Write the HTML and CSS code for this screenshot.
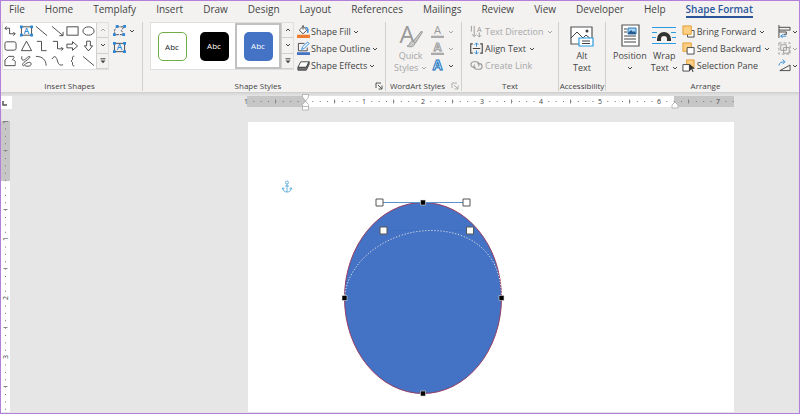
FILE: index.html
```html
<!DOCTYPE html>
<html lang="en">
<head>
<meta charset="utf-8">
<title>Document editor</title>
<link rel="stylesheet" href="styles.css">
</head>
<body>
<svg class="sprite" aria-hidden="true">
  <symbol id="caret" viewBox="0 0 6 6"><path d="M1 2l2 2 2-2" fill="none" stroke="currentColor" stroke-width="1"/></symbol>
  <symbol id="more" viewBox="0 0 6 6"><path d="M0.5 0.8h5" stroke="currentColor" fill="none"/><path d="M0.5 2.5h5L3 5.3z" fill="currentColor"/></symbol>
  <symbol id="launch" viewBox="0 0 8 8"><path d="M1 6V1h5M3 3l3.6 3.6M7 3.5V7H3.5" stroke="currentColor" fill="none" stroke-width=".9"/></symbol>
</svg>
<div class="app">
  <nav class="tabs" aria-label="Ribbon tabs">
    <a href="#">File</a><a href="#">Home</a><a href="#">Templafy</a><a href="#">Insert</a><a href="#">Draw</a><a href="#">Design</a><a href="#">Layout</a><a href="#">References</a><a href="#">Mailings</a><a href="#">Review</a><a href="#">View</a><a href="#">Developer</a><a href="#">Help</a><a href="#" class="active" aria-current="page">Shape Format</a>
  </nav>

  <div class="ribbon">
    <section class="group shapes">
      <div class="tools">
        <div class="gallery">
          <div class="shape-grid">
            <button aria-label="Elbow connector"><svg viewBox="0 0 14 12"><path d="M1 3h5v6h6M3 1L1 3l2 2M10 7l2 2-2 2"/></svg></button>
            <button aria-label="Text box"><svg viewBox="0 0 14 12"><rect x="1.5" y="1.5" width="11" height="9"/><text class="glyph" x="7" y="9">A</text><path class="bluefill" d="M0 0h3v3H0zM11 0h3v3h-3zM0 9h3v3H0zM11 9h3v3h-3z"/></svg></button>
            <button aria-label="Line"><svg viewBox="0 0 14 12"><path d="M1 1l12 10"/></svg></button>
            <button aria-label="Arrow line"><svg viewBox="0 0 14 12"><path d="M1 1l12 10M13 7v4H9"/></svg></button>
            <button aria-label="Rectangle"><svg viewBox="0 0 14 12"><rect x="1" y="1.5" width="12" height="9"/></svg></button>
            <button aria-label="Oval"><svg viewBox="0 0 14 12"><ellipse cx="7" cy="6" rx="6" ry="4.5"/></svg></button>
            <button aria-label="Rounded rectangle"><svg viewBox="0 0 14 12"><rect x="1" y="1.5" width="12" height="9" rx="2"/></svg></button>
            <button aria-label="Triangle"><svg viewBox="0 0 14 12"><path d="M7 .8L12.5 11h-11z"/></svg></button>
            <button aria-label="Elbow"><svg viewBox="0 0 14 12"><path d="M2 1h5v10h5.5"/></svg></button>
            <button aria-label="Elbow arrow"><svg viewBox="0 0 14 12"><path d="M2 1h5v8h6M11 7l2 2-2 2"/></svg></button>
            <button aria-label="Right arrow"><svg viewBox="0 0 14 12"><path d="M1 4h6V1.3L12.5 6 7 10.7V8H1z"/></svg></button>
            <button aria-label="Down arrow"><svg viewBox="0 0 14 12"><path d="M5 .8h4v5h2.5L7 11.3 2.5 5.8H5z"/></svg></button>
            <button aria-label="Freeform"><svg viewBox="0 0 14 12"><path d="M1 11V5l4-4h5c3 1-3 4 0 4s2 3 2 6z"/></svg></button>
            <button aria-label="Scribble"><svg viewBox="0 0 14 12"><path d="M2 1c-1 5 2 5 5 2s5-2 3 0-6 4-7 6 1 3 2 1 7-4 7-1-4 3-7 2"/></svg></button>
            <button aria-label="Arc"><svg viewBox="0 0 14 12"><path d="M1 1c7 0 11 4 11 10"/></svg></button>
            <button aria-label="Curve"><svg viewBox="0 0 14 12"><path d="M1 4c3-5 5-2 6 2s3 5 6 4"/></svg></button>
            <button aria-label="Brace"><svg viewBox="0 0 14 12"><path d="M9 .8c-2 0-2 .8-2 2v1.7L5.5 6 7 7.5v1.7c0 1.2 0 2 2 2"/></svg></button>
            <button aria-label="Straight line"><svg viewBox="0 0 14 12"><path d="M1 1l12 10"/></svg></button>
          </div>
          <div class="scroller">
            <button class="off" aria-label="Scroll shapes up"><svg class="caret up"><use href="#caret"/></svg></button>
            <button aria-label="Scroll shapes down"><svg class="caret"><use href="#caret"/></svg></button>
            <button aria-label="More shapes"><svg class="caret"><use href="#more"/></svg></button>
          </div>
        </div>
        <div class="stack edit">
          <button aria-label="Edit shape"><svg class="icon" viewBox="0 0 14 12"><path class="ink" d="M4 2h8L9 6l3 4.5H2L1.5 6z" stroke-dasharray="3 1"/><path class="bluefill" d="M3 0h3v3H3zM11 0h3v3h-3zM0 9h3v3H0zM10 9h3v3h-3z"/></svg><svg class="caret"><use href="#caret"/></svg></button>
          <button aria-label="Draw text box"><svg class="icon" viewBox="0 0 14 12"><rect class="ink" x="1.5" y="1.5" width="11" height="9"/><text class="glyph" x="7" y="9">A</text><path class="bluefill" d="M0 0h3v3H0zM11 0h3v3h-3zM0 9h3v3H0zM11 9h3v3h-3z"/></svg></button>
        </div>
      </div>
      <h2>Insert Shapes</h2>
    </section>

    <section class="group styles">
      <div class="tools">
        <div class="gallery">
          <div class="style-list">
            <button><span class="swatch outline">Abc</span></button>
            <button><span class="swatch black">Abc</span></button>
            <button class="selected" aria-pressed="true"><span class="swatch azure">Abc</span></button>
          </div>
          <div class="scroller">
            <button aria-label="Scroll styles up"><svg class="caret up"><use href="#caret"/></svg></button>
            <button aria-label="Scroll styles down"><svg class="caret"><use href="#caret"/></svg></button>
            <button aria-label="More styles"><svg class="caret"><use href="#more"/></svg></button>
          </div>
        </div>
        <div class="stack">
          <button><svg class="icon" viewBox="0 0 14 14"><path d="M0 10.5h14V14H0z" fill="#ed7d31"/><path d="M6.5 1.5L2.5 5.5 6.5 9.5 10.5 5.5z" fill="#fff" stroke="#444"/><path class="ink" d="M6.5 0v5"/><path class="blue" d="M9 2.5c3 0 3 3 2.5 6" stroke-width="1.5"/></svg>Shape Fill<svg class="caret"><use href="#caret"/></svg></button>
          <button><svg class="icon" viewBox="0 0 14 14"><path d="M0 11h14v3H0z" fill="#4472c4"/><path class="ink" d="M8 1.5H1.5v8H11V6"/><path d="M5 8l1-3 5.5-5L13 1.7 7.5 7z" fill="#fff" stroke="#2b88d8"/></svg>Shape Outline<svg class="caret"><use href="#caret"/></svg></button>
          <button><svg class="icon" viewBox="0 0 14 14"><path d="M1 9l3-6h9l-3 6z" fill="#fff" stroke="#444"/><path d="M1 9v3h9l3-6V3l-3 6z" fill="#777" stroke="#444"/></svg>Shape Effects<svg class="caret"><use href="#caret"/></svg></button>
        </div>
      </div>
      <h2>Shape Styles</h2>
      <button class="launch" aria-label="Shape style options"><svg><use href="#launch"/></svg></button>
    </section>

    <section class="group wordart">
      <div class="tools">
        <button class="tall off"><svg class="big" viewBox="0 0 24 24"><text class="letter large" x="8" y="19">A</text><path d="M22.5 7l-8 10 2 2 7-11zM14 17c-4 0-2 4-6 5 4 2 8 0 8-3z" fill="#c8c8c8" stroke="#999"/></svg><span>Quick</span><span>Styles <svg class="caret"><use href="#caret"/></svg></span></button>
        <div class="stack effects">
          <button class="off" aria-label="Text fill"><svg class="icon" viewBox="0 0 14 14"><path d="M0 11.5h14V14H0z" fill="#aaa"/><text class="letter" x="7" y="10">A</text></svg><svg class="caret"><use href="#caret"/></svg></button>
          <button class="off" aria-label="Text outline"><svg class="icon" viewBox="0 0 14 14"><path d="M0 11.5h14V14H0z" fill="#aaa"/><text class="letter hollow" x="7" y="10">A</text></svg><svg class="caret"><use href="#caret"/></svg></button>
          <button aria-label="Text effects"><svg class="icon" viewBox="0 0 14 14"><text class="letter glow" x="7" y="12">A</text></svg><svg class="caret"><use href="#caret"/></svg></button>
        </div>
      </div>
      <h2>WordArt Styles</h2>
      <button class="launch off" aria-label="WordArt options"><svg><use href="#launch"/></svg></button>
    </section>

    <section class="group text">
      <div class="tools">
        <div class="stack">
          <button class="off"><svg class="icon" viewBox="0 0 14 14"><path d="M4.5 1v11M2 10l2.5 2.5L7 10M1.5 1v6M10 8v5M8 11l2 2 2-2" fill="none" stroke="#999"/><text class="letter small" x="10" y="7">A</text></svg>Text Direction<svg class="caret"><use href="#caret"/></svg></button>
          <button><svg class="icon" viewBox="0 0 14 14"><path class="ink" d="M3 2H.8v10H3M11 2h2.2v10H11M3 7h8" stroke-width="1.2"/><path class="blue" d="M7 1v4M5 3l2-2 2 2M7 13V9M5 11l2 2 2-2"/></svg>Align Text<svg class="caret"><use href="#caret"/></svg></button>
          <button class="off"><svg class="icon" viewBox="0 0 14 14"><path d="M6 9H4a3 3 0 010-6h3a3 3 0 012 5M8 5h2a3 3 0 010 6H7a3 3 0 01-2-5" fill="none" stroke="#999" stroke-width="1.2"/></svg>Create Link</button>
        </div>
      </div>
      <h2>Text</h2>
    </section>

    <section class="group access">
      <div class="tools">
        <button class="tall"><svg class="big" viewBox="0 0 24 24"><path d="M1 3h21v17H1z" fill="#fff" stroke="#555" stroke-width="1.2"/><path class="ink" d="M1 14l6-6 6 6 3-3 6 5"/><circle cx="17" cy="7" r="1.5" fill="#444"/><path d="M9 14h14v8H9z" fill="#fff" stroke="#2b9be0" stroke-width="1.2"/><path class="ink" d="M12 17h8M12 19.5h8"/></svg><span>Alt</span><span>Text</span></button>
      </div>
      <h2>Accessibility</h2>
    </section>

    <section class="group arrange">
      <div class="tools">
        <button class="tall"><svg class="big" viewBox="0 0 24 24"><path d="M4 1h17v21H4z" fill="#fff" stroke="#555" stroke-width="1.2"/><path d="M10 4h8v6h-8z" fill="#a8d5f5" stroke="#2b78b8"/><path d="M10 9l3-3 2 2 1-1 2 2v1h-8z" fill="#245c91"/><path class="ink" d="M6 5h3M6 8h3M6 12h12M6 15h12M6 18h12"/></svg><span>Position</span><span><svg class="caret"><use href="#caret"/></svg></span></button>
        <button class="tall"><svg class="big" viewBox="0 0 24 24"><path d="M0 3.5h24M0 8.5h5M19 8.5h5M0 13.5h4M20 13.5h4M0 19.5h24" stroke="#2b9be0" stroke-width="1.2"/><path d="M5 17v-2a7 7 0 0114 0v2h-4v-2a3 3 0 00-6 0v2z" fill="#333"/></svg><span>Wrap</span><span>Text <svg class="caret"><use href="#caret"/></svg></span></button>
        <div class="stack order">
          <button><svg class="icon" viewBox="0 0 14 14"><path d="M6 6h7v7H6z" fill="#fff" stroke="#444"/><path d="M1 1h9v9H1z" fill="#ffd083" stroke="#e09a32"/></svg>Bring Forward<svg class="caret"><use href="#caret"/></svg></button>
          <button><svg class="icon" viewBox="0 0 14 14"><path d="M1 1h9v9H1z" fill="#ffd083" stroke="#e09a32"/><path d="M5.5 6H13v7H5.5z" fill="#fff" stroke="#444"/></svg>Send Backward<svg class="caret"><use href="#caret"/></svg></button>
          <button><svg class="icon" viewBox="0 0 14 14"><path d="M5 1h8v8H5z" fill="#ffd083" stroke="#e09a32"/><path d="M1 6h7v7H1z" fill="#fff" stroke="#444"/><path d="M8 5v8l2-2 1.5 3 1-.5-1.5-3h3z" fill="#333"/></svg>Selection Pane</button>
        </div>
        <div class="stack align">
          <button aria-label="Align"><svg class="icon" viewBox="0 0 14 14"><path class="ink" d="M1 0v14M1 2.5h12v3H1M1 7.5h8v2.5H6"/><path class="blue" d="M9 12H3M5 10l-2 2 2 2"/></svg><svg class="caret"><use href="#caret"/></svg></button>
          <button class="off" aria-label="Group"><svg class="icon" viewBox="0 0 14 14"><path d="M3 3h6v6H3zM6 6h6v6H6z" fill="none" stroke="#999"/><path d="M1 1h12v12H1z" fill="none" stroke="#999" stroke-dasharray="3 2"/></svg><svg class="caret"><use href="#caret"/></svg></button>
          <button aria-label="Rotate"><svg class="icon" viewBox="0 0 14 14"><path class="ink" d="M2 12.5h11v-6z"/><path class="blue" d="M1 7c0-3 3-4 6-4M5 .5L7.5 3 5 5.5"/></svg><svg class="caret"><use href="#caret"/></svg></button>
        </div>
      </div>
      <h2>Arrange</h2>
    </section>
  </div>

  <main class="workspace">
    <div class="side">
      <button class="tabstop" aria-label="Tab stop"><svg viewBox="0 0 10 13"><path d="M2 5v4h4" fill="none" stroke="#555" stroke-width="1.5"/></svg></button>
      <svg class="vruler" width="9" height="291" viewBox="0 0 9 291">
        <path d="M0 0h9v60H0z" fill="#c6c6c6"/><path d="M0 60h9v231H0z" fill="#fff"/>
        <path class="dots" d="M4.5 7.5V291"/>
        <path class="dash" d="M2.5 29.5h4M2.5 88.5h4M2.5 147.5h4M2.5 206.5h4M2.5 265.5h4"/>
        <path d="M0 114h9v8H0zM0 173h9v8H0zM0 232h9v8H0z" fill="#fff"/>
        <g class="num"><text transform="translate(7 1) rotate(-90)">1</text><text transform="translate(7 118) rotate(-90)">1</text><text transform="translate(7 177) rotate(-90)">2</text><text transform="translate(7 236) rotate(-90)">3</text></g>
      </svg>
    </div>
    <div class="desk">
      <svg class="hruler" width="490" height="18" viewBox="0 0 490 18">
        <path d="M3 3h58v11H3z" fill="#c6c6c6"/><path d="M61 3h369v11H61z" fill="#fff"/><path d="M430 3h60v11h-60z" fill="#c6c6c6"/>
        <path class="dots" d="M9.3 8.5H490"/>
        <path class="dash" d="M31.5 6.5v4M90.5 6.5v4M149.5 6.5v4M208.5 6.5v4M267.5 6.5v4M326.5 6.5v4M385.5 6.5v4M444.5 6.5v4"/>
        <path d="M116 4h8v9h-8zM175 4h8v9h-8zM234 4h8v9h-8zM293 4h8v9h-8zM352 4h8v9h-8zM411 4h8v9h-8z" fill="#fff"/><path d="M470 4h8v9h-8z" fill="#c6c6c6"/>
        <g class="num"><text x="2" y="11">1</text><text x="120" y="11">1</text><text x="179" y="11">2</text><text x="238" y="11">3</text><text x="297" y="11">4</text><text x="356" y="11">5</text><text x="415" y="11">6</text><text x="474" y="11">7</text></g>
        <path d="M58.5 1.5h6V4l-3 4-3-4zM61.5 8l3 3.5V17h-6v-5.5zM58.5 13.5h6M431 9l3 3v3h-6v-3z" fill="#fff" stroke="#aaa" stroke-width=".8"/>
      </svg>
      <article class="page">
        <svg width="486" height="290" viewBox="0 0 486 290" role="img" aria-label="Oval with edit points">
          <g class="anchor"><circle cx="39" cy="60.5" r="1.5"/><path d="M39 62v8M37 64h4M35 66c0 3 1.5 4 4 4s4-1 4-4M34 67.5l1-2 1.5 1.5M44 67.5l-1-2-1.5 1.5"/></g>
          <ellipse cx="175" cy="176" rx="78.5" ry="95.5" fill="#4472c4" stroke="#963e63"/>
          <path d="M132 80.5h86" stroke="#5b91cc"/><path d="M136 108.5h86" stroke="#3d6fc5"/>
          <path d="M96.5 176C99 138 141 108.5 183 108.5C225 108.5 254 133 253.5 176" fill="none" stroke="#e4e4e4" stroke-dasharray="1.2 1.8"/>
          <path d="M128 77h7v7h-7zM215 77h7v7h-7zM132 105h7v7h-7zM218.5 105h7v7h-7z" fill="#fff" stroke="#555"/>
          <path d="M172.5 78h5v5h-5zM94 173.5h5v5h-5zM251 173.5h5v5h-5zM172.5 269h5v5h-5z" stroke="#ddd" stroke-width=".6"/>
        </svg>
      </article>
    </div>
  </main>
</div>
</body>
</html>
```
FILE: styles.css
```css
* { box-sizing: border-box; }
body { margin: 0; font-family: "Open Sans", "Noto Sans", sans-serif; font-size: 9px; color: #444; }
.sprite { display: none; }
.app { min-height: 100vh; display: flex; flex-direction: column; border: 1px solid #b47fdb; background: #f3f2f1; overflow: hidden; }
button { display: flex; align-items: center; padding: 0; border: 0; background: none; color: inherit; font: inherit; white-space: nowrap; }
svg { display: block; flex: none; overflow: visible; }

.tabs { display: flex; justify-content: space-between; height: 18px; padding: 0 46px 0 8px; font-size: 10px; line-height: 16px; }
.tabs a { color: #444; text-decoration: none; white-space: nowrap; }
.tabs .active { height: 17px; color: #2b579a; font-weight: 600; border-bottom: 2px solid #2b579a; }

.ribbon { display: grid; grid-template-columns: 142fr 243fr 76fr 97fr 47fr 193fr; height: 74px; padding: 3px 0 1px; border-bottom: 1px solid #d0d0d0; }
.group { position: relative; min-width: 0; display: flex; flex-direction: column; justify-content: space-between; border-right: 1px solid #d2d0ce; }
.group:last-child { border-right: 0; }
.group h2 { margin: 0; font-size: 8px; line-height: 10px; font-weight: 400; text-align: center; white-space: nowrap; color: #444; }
.tools { display: flex; }
.off { color: #a6a6a6; }
.icon { width: 13px; height: 13px; }
.caret { width: 6px; height: 6px; }
.up { transform: rotate(180deg); }
.ink { fill: none; stroke: #444; }
.blue { fill: none; stroke: #2b88d8; }
.bluefill { fill: #2b88d8; stroke: none; }
.glyph { fill: #2b88d8; stroke: none; font-size: 9px; font-weight: 600; text-anchor: middle; }
.letter { fill: #999; font-size: 12px; text-anchor: middle; }
.small { font-size: 8px; }
.large { font-size: 24px; }
.hollow { fill: #f5f5f5; stroke: #999; stroke-width: 1; font-weight: 700; }
.glow { fill: #cfe7fa; stroke: #1671bd; stroke-width: 1; font-size: 15px; font-weight: 700; }
.launch { position: absolute; right: 2px; bottom: 1px; }
.launch svg { width: 8px; height: 8px; }

.gallery { display: flex; height: 48px; background: #fff; border: 1px solid #e1dfdd; }
.scroller { display: grid; grid-template-rows: repeat(3, 1fr); width: 12px; background: #f3f2f1; }
.scroller button { justify-content: center; border: 1px solid #d2d0ce; border-width: 0 0 1px 1px; }
.shapes .tools { padding-left: 1px; }
.shapes h2 { padding-right: 4px; }
.shape-grid { display: grid; grid-template-columns: repeat(6, 1fr); width: 93px; }
.shape-grid button { justify-content: center; }
.shape-grid svg { width: 13px; height: 12px; fill: none; stroke: #444; stroke-width: 1; }
.shape-grid .bluefill, .shape-grid .glyph { fill: #2b88d8; stroke: none; }

.stack { display: flex; flex-direction: column; padding-top: 1px; }
.stack button { height: 17px; gap: 2px; }
.stack.edit { padding: 0 0 0 4px; }

.styles .tools { padding-left: 7px; gap: 3px; }
.styles .stack button { gap: 1px; }
.styles h2 { padding-right: 12px; }
.style-list { display: flex; width: 130px; justify-content: space-between; }
.style-list button { flex: 1; justify-content: center; }
.style-list .selected { border: 2px solid #c0c0c0; }
.swatch { width: 29px; height: 29px; border-radius: 5px; font-size: 8px; line-height: 27px; text-align: center; }
.outline { border: 1px solid #70ad47; color: #222; }
.black { background: #000; color: #fff; }
.azure { background: #4472c4; color: #fff; }

.tall { flex-direction: column; }
.tall span { display: flex; align-items: center; gap: 3px; height: 12px; line-height: 12px; }
.big { width: 24px; height: 24px; margin: 2px 0; }
.wordart .tools { padding-left: 8px; gap: 4px; }
.wordart h2 { padding-right: 12px; }
.effects button { gap: 3px; }
.text .tools { padding-left: 8px; }
.access .tools { justify-content: center; }
.arrange .tools { padding-left: 7px; gap: 4px; }
.arrange h2 { padding-left: 6px; }
.order { flex: 1; min-width: 0; }
.stack .caret { margin-left: 1px; }
.align { margin-right: 1px; }
.align button { gap: 0; }

.workspace { flex: 1; display: flex; background: #e6e6e6; box-shadow: inset 0 2px 2px #d9d9d9; }
.side { width: 10px; padding-top: 3px; }
.tabstop { width: 11px; height: 13px; margin-bottom: 12px; background: #fff; }
.tabstop svg { width: 10px; height: 13px; }
.desk { flex: 1; padding-left: 233px; }
.dots { stroke: #777; fill: none; stroke-dasharray: 1 6.375; }
.dash { stroke: #888; }
.num { font-size: 7px; fill: #444; text-anchor: middle; }
.page { width: 486px; margin: 11px 0 0 4px; background: #fff; }
.anchor { fill: none; stroke: #4a9fd8; stroke-width: .8; }
```
